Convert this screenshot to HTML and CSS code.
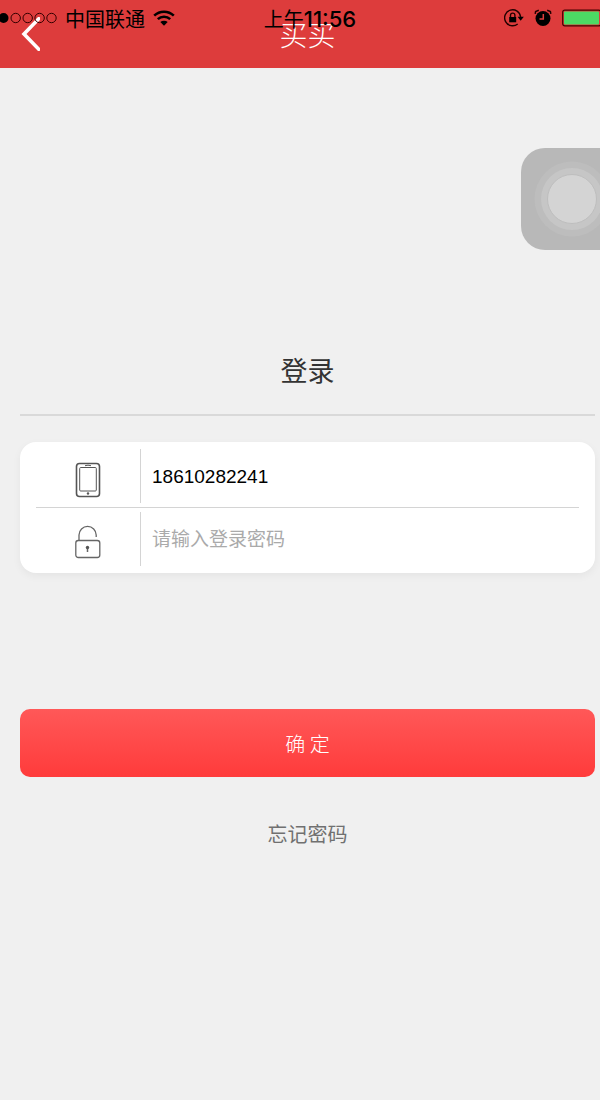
FILE: index.html
```html
<!DOCTYPE html>
<html lang="zh-CN">
<head>
  <meta charset="UTF-8">
  <meta name="viewport" content="width=device-width, initial-scale=1.0">
  <title>登录</title>
  <link rel="stylesheet" href="styles.css">
</head>
<body>
  <div class="page">
    <header class="navbar">
      <button class="back" type="button" aria-label="返回">
        <svg width="20" height="34" viewBox="0 0 20 34" fill="none" stroke="#fff" stroke-width="3.600">
          <path d="M20 .5 4 17l16 16.500"/>
        </svg>
      </button>
      <h1 class="navbar-title">买买</h1>
    </header>

    <div class="statusbar">
      <div class="status-left">
        <svg width="57" height="12" viewBox="0 0 57 12" fill="none" stroke="#300" stroke-width="1">
          <circle cx="3.500" cy="6" r="5" fill="#000" stroke="none"/>
          <circle cx="15.700" cy="6" r="4.700"/>
          <circle cx="27.700" cy="6" r="4.700"/>
          <circle cx="39.600" cy="6" r="4.700"/>
          <circle cx="51.500" cy="6" r="4.700"/>
        </svg>
        <span>中国联通</span>
        <svg width="22" height="16" viewBox="0 0 22 16" fill="none" stroke="#000" stroke-width="2.500">
          <path d="M1.200 5.700a14 14 0 0 1 19.600 0M4.800 9.200a9 9 0 0 1 12.400 0"/>
          <path d="M7.300 12.100a5.400 5.400 0 0 1 7.400 0L11 15.700z" fill="#000" stroke="none"/>
        </svg>
      </div>
      <div class="status-time">上午<b>11:56</b></div>
      <div class="status-right">
        <svg width="20" height="18" viewBox="0 0 20 18" fill="none" stroke="#200" stroke-width="1.400">
          <path d="M13.700 15A8 8 0 1 1 16.600 8"/>
          <path d="M13.600 7.800h6.200l-3.100 4z" fill="#000" stroke="none"/>
          <rect x="5.200" y="8" width="7" height="5.300" fill="#000" stroke="none"/>
          <path d="M6.500 8V6.300a2.200 2.200 0 0 1 4.400 0V8"/>
        </svg>
        <svg width="18" height="18" viewBox="0 0 18 18" fill="none" stroke="#200" stroke-width="1.500">
          <circle cx="9" cy="9.500" r="7.500" fill="#000" stroke="none"/>
          <path d="M1.200 4.800 1.600 2.500 4.800 1.300M16.800 4.800l-.4-2.300-3.200-1.200"/>
          <path d="M9.300 5v5H5.500" stroke="#dd3c3c"/>
        </svg>
        <svg width="38" height="18" viewBox="0 0 38 18">
          <rect x=".7" y="1.200" width="38" height="15.600" rx="2" fill="#dd3c3c" stroke="#400" stroke-width="1.200"/>
          <rect x="2" y="2.500" width="35" height="13" rx="1" fill="#4cd964"/>
        </svg>
      </div>
    </div>

    <main class="login">
      <h2 class="login-title">登录</h2>
      <form>
        <div class="card">
          <div class="field">
            <label class="field-icon" for="phone" aria-label="手机号">
              <svg width="26" height="36" viewBox="0 0 26 36" fill="none" stroke="#555">
                <rect x="1.500" y="1.500" width="23" height="33" rx="3" stroke-width="1.600"/>
                <rect x="4.700" y="5.500" width="16.600" height="23.500" rx="1"/>
                <path d="M10 3.700q3-1 6 0"/>
                <circle cx="13" cy="31.500" r="1.200" fill="#555" stroke="none"/>
              </svg>
            </label>
            <input id="phone" type="tel" value="18610282241">
          </div>
          <div class="field">
            <label class="field-icon" for="password" aria-label="登录密码">
              <svg width="26" height="36" viewBox="0 0 26 36" fill="none" stroke="#666" stroke-width="1.300">
                <rect x=".8" y="15.500" width="24" height="17" rx="2.500"/>
                <path d="M4 15.500V10a8.600 8.600 0 0 1 17.200 0v2"/>
                <path d="M12.500 22v5" stroke-width="1.500"/>
                <circle cx="12.500" cy="22.500" r="1.700" fill="#555" stroke="none"/>
              </svg>
            </label>
            <input id="password" type="password" placeholder="请输入登录密码">
          </div>
        </div>
        <button class="submit" type="submit">确 定</button>
      </form>
      <a class="forgot" href="#">忘记密码</a>
    </main>

    <!-- floating assistive button, partly off the right edge -->
    <button class="assist" type="button" aria-label="辅助按钮">
      <svg width="102" height="102" viewBox="0 0 102 102">
        <circle cx="51" cy="51" r="37.500" fill="#bdbdbd"/>
        <circle cx="51" cy="51" r="31" fill="#c6c6c6"/>
        <circle cx="51" cy="51" r="24.500" fill="#d4d4d4" stroke="#bebebe"/>
      </svg>
    </button>
  </div>
</body>
</html>
```
FILE: styles.css
```css
* { box-sizing: border-box; }
body { margin: 0; background: #f0f0f0; font-family: "Liberation Sans", "Noto Sans CJK SC", sans-serif; }
svg { display: block; flex: none; }
button { border: 0; padding: 0; font-family: inherit; cursor: pointer; }

.page { position: relative; min-height: 100vh; overflow: hidden; }

.navbar { display: grid; grid-template-columns: 40px 1fr 40px; align-items: center; height: 68px; padding: 0 5px 0 20px; background: #dd3c3c; }
.back { background: none; }
.navbar-title { margin: 0; padding-top: 6px; color: #fff; font-size: 28px; line-height: 40px; font-weight: 300; text-align: center; }

.statusbar { position: absolute; top: 0; left: 0; right: 0; display: grid; grid-template-columns: 1fr auto 1fr; align-items: center; height: 34px; font-size: 20px; line-height: 32px; color: #000; }
.status-left { display: flex; align-items: center; gap: 8px; }
.status-left span, .status-time { padding-top: 3px; }
.status-time { padding-left: 20px; }
.status-time b { font-family: Inter, sans-serif; font-size: 22px; font-weight: 500; }
.status-right { display: flex; align-items: center; justify-content: flex-end; gap: 10px; }

.login { padding: 284px 5px 0 20px; }
.login-title { margin: 0 0 26px; padding-bottom: 22px; border-bottom: 2px solid #d9d9d9; color: #333; font-size: 27px; line-height: 40px; font-weight: 400; text-align: center; }

.card { padding: 0 16px; background: #fff; border-radius: 16px; box-shadow: 0 3px 8px rgba(0,0,0,0.05); }
.field { display: flex; height: 65px; padding-top: 7px; }
.field + .field { height: 66px; padding-top: 4px; border-top: 1px solid #d4d4d4; }
.field-icon { display: flex; align-items: center; justify-content: center; width: 105px; height: 54px; padding-top: 8px; border-right: 1px solid #d4d4d4; }
.field input { flex: 1; min-width: 0; height: 56px; padding: 0 11px; border: 0; outline: 0; background: none; color: #000; font-family: inherit; font-size: 19px; }
.field input::placeholder { color: #aaa; opacity: 1; }

.submit { display: block; width: 100%; height: 68px; margin-top: 136px; border-radius: 10px; background: linear-gradient(#ff5858, #ff3b3b); color: #fff; font-family: "Noto Sans CJK SC", sans-serif; font-size: 20px; font-weight: 300; }
.forgot { display: block; width: max-content; margin: 42px auto 0; color: #707070; font-size: 20px; line-height: 32px; text-decoration: none; }

.assist { position: absolute; top: 148px; right: -23px; width: 102px; height: 102px; border-radius: 24px; background: #b8b8b8; }
```
